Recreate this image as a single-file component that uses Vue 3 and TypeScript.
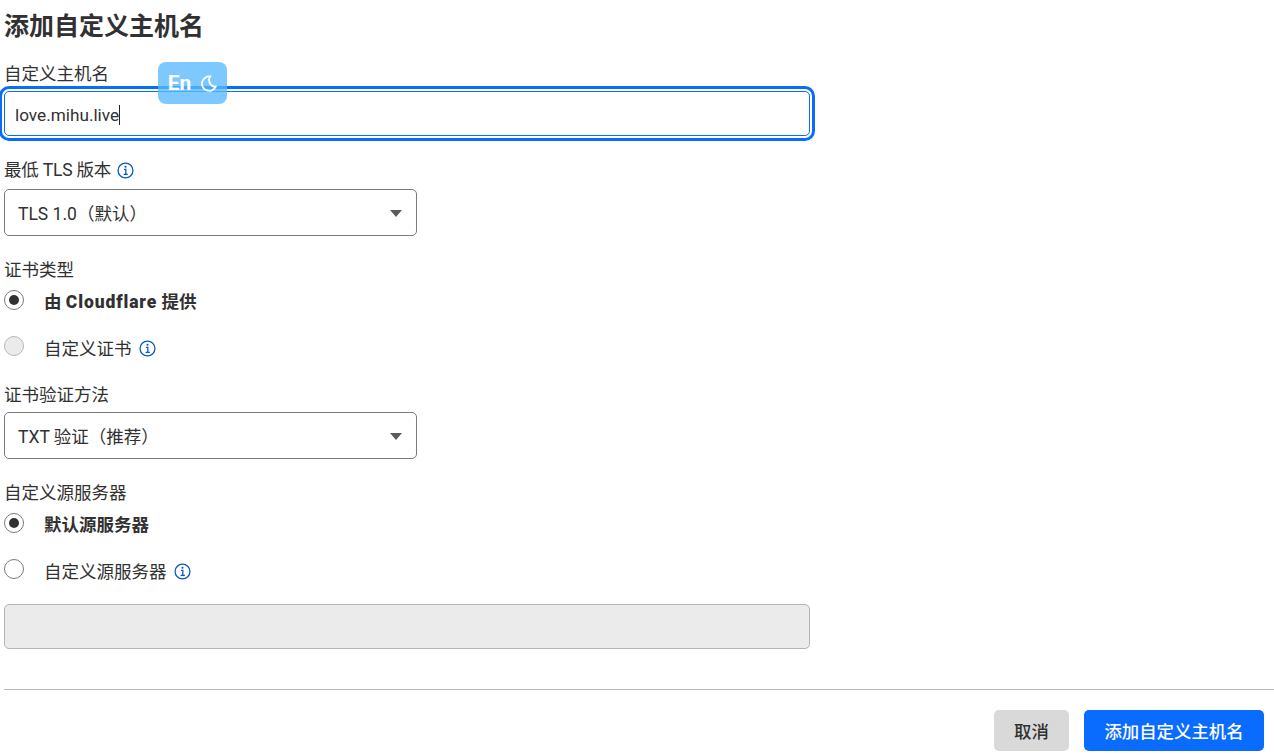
<script setup lang="ts">
const selects = { tls: 'TLS 1.0（默认）', cert: 'TXT 验证（推荐）' }
</script>

<template>
  <div class="page">
    <form class="form" @submit.prevent>
      <h2 class="title">添加自定义主机名</h2>

      <label class="label first">自定义主机名</label>
      <div class="input focus"><span class="value">love.mihu.live</span><span class="caret"></span></div>

      <div class="label tls">最低 TLS 版本
        <svg class="info" viewBox="0 0 16 16"><circle cx="8" cy="8" r="7" /><path d="M6.6 7h1.7v4.4M6.2 11.6h4" /><circle class="dot" cx="8" cy="4.5" r="1" /></svg>
      </div>
      <div class="select"><span>{{ selects.tls }}</span><i class="arrow"></i></div>

      <div class="label cert">证书类型</div>
      <div class="radio-row r1"><span class="radio on"></span><b>由 <span class="heavy">Cloudflare</span> 提供</b></div>
      <div class="radio-row r2"><span class="radio off"></span><span class="rtext">自定义证书</span>
        <svg class="info" viewBox="0 0 16 16"><circle cx="8" cy="8" r="7" /><path d="M6.6 7h1.7v4.4M6.2 11.6h4" /><circle class="dot" cx="8" cy="4.5" r="1" /></svg>
      </div>

      <div class="label method">证书验证方法</div>
      <div class="select"><span>{{ selects.cert }}</span><i class="arrow"></i></div>

      <div class="label origin">自定义源服务器</div>
      <div class="radio-row r1"><span class="radio on"></span><b>默认源服务器</b></div>
      <div class="radio-row r2"><span class="radio"></span><span class="rtext">自定义源服务器</span>
        <svg class="info" viewBox="0 0 16 16"><circle cx="8" cy="8" r="7" /><path d="M6.6 7h1.7v4.4M6.2 11.6h4" /><circle class="dot" cx="8" cy="4.5" r="1" /></svg>
      </div>
      <div class="input disabled"></div>
    </form>

    <footer class="footer">
      <button class="btn cancel" type="button">取消</button>
      <button class="btn primary" type="button">添加自定义主机名</button>
    </footer>

    <div class="badge">
      <span>En</span>
      <svg viewBox="0 0 16 16"><path d="M9.6 1.4A6.8 6.8 0 1 0 14.8 11 6.2 6.2 0 0 1 9.6 1.4Z" /></svg>
    </div>
  </div>
</template>

<style>
html, body { margin: 0; background: #fff; }
</style>

<style scoped>
.page {
  position: relative;
  width: 1274px;
  height: 755px;
  overflow: hidden;
  padding-left: 4px;
  box-sizing: border-box;
  color: #313131;
  font-family: Roboto, "Noto Sans CJK SC", sans-serif;
  font-size: 17.5px;
}
.form { width: 806px; }
.title {
  margin: 0;
  padding-top: 11px;
  font-size: 25px;
  line-height: 32px;
  font-weight: 700;
}
.label {
  display: flex;
  align-items: center;
  height: 24px;
  line-height: 24px;
}
.first { margin-top: 19px; }
.tls { margin-top: 22px; margin-bottom: 7px; letter-spacing: -0.2px; }
.cert { margin-top: 22px; }
.method { margin-top: 23px; margin-bottom: 5px; }
.origin { margin-top: 22px; }
.info {
  width: 17px;
  height: 17px;
  margin-left: 6px;
  fill: none;
  stroke: #0a57c2;
  stroke-width: 1.2;
  flex: none;
}
.r2 .info { margin-left: 7px; margin-top: 4px; }
.info .dot { fill: #0a57c2; stroke: none; }
.input {
  display: flex;
  align-items: center;
  box-sizing: border-box;
  width: 806px;
  height: 45px;
  padding: 2px 10px 0;
  border: 1px solid #b4b4b4;
  border-radius: 5px;
}
.value { font-size: 17.2px; }
.focus {
  margin-top: 5px;
  border-color: #0a6cff;
  outline: 3px solid #0a6cff;
  outline-offset: 2px;
}
.caret { width: 1px; height: 20px; background: #222; }
.disabled { margin-top: 21px; background: #ebebeb; }
.select {
  display: flex;
  align-items: center;
  justify-content: space-between;
  box-sizing: border-box;
  width: 413px;
  height: 47px;
  padding: 0 14px 0 13px;
  border: 1px solid #7a7a7a;
  border-radius: 5px;
}
.arrow {
  width: 0;
  height: 0;
  margin-top: 1px;
  border-left: 6.5px solid transparent;
  border-right: 6.5px solid transparent;
  border-top: 7px solid #5c5c5c;
}
.radio-row {
  display: flex;
  align-items: center;
}
.r1 { height: 28px; margin-top: 4px; }
.r2 { height: 28px; margin-top: 18px; }
.radio-row b { margin-left: 20px; font-weight: 700; }
.heavy { font-weight: 900; letter-spacing: 0.9px; }
.rtext { margin-left: 20px; padding-top: 2px; }
.radio {
  position: relative;
  box-sizing: border-box;
  width: 20px;
  height: 20px;
  border: 1px solid #7a7a7a;
  border-radius: 50%;
  background: #fff;
  flex: none;
}
.radio.on::after {
  content: "";
  position: absolute;
  inset: 4px;
  border-radius: 50%;
  background: #313131;
}
.radio.off { background: #ebebeb; border-color: #b9b9b9; }
.footer {
  display: flex;
  justify-content: flex-end;
  gap: 15px;
  margin-top: 40px;
  padding: 20px 10px 0 0;
  border-top: 1px solid #b9b9b9;
}
.btn {
  height: 41px;
  border: 0;
  border-radius: 5px;
  font-family: inherit;
  font-size: 17.4px;
  font-weight: 500;
}
.cancel { width: 75px; background: #d9d9d9; color: #313131; }
.primary { width: 180px; background: #0a6cff; color: #fff; }
.badge {
  position: absolute;
  left: 158px;
  top: 62px;
  display: flex;
  align-items: center;
  justify-content: center;
  gap: 9px;
  width: 69px;
  height: 42px;
  border-radius: 8px;
  background: rgba(88, 184, 255, 0.78);
  color: #fff;
  font-size: 21px;
  font-weight: 700;
}
.badge svg { width: 17px; height: 17px; margin-top: 1px; fill: none; stroke: #fff; stroke-width: 1.7; }
</style>
